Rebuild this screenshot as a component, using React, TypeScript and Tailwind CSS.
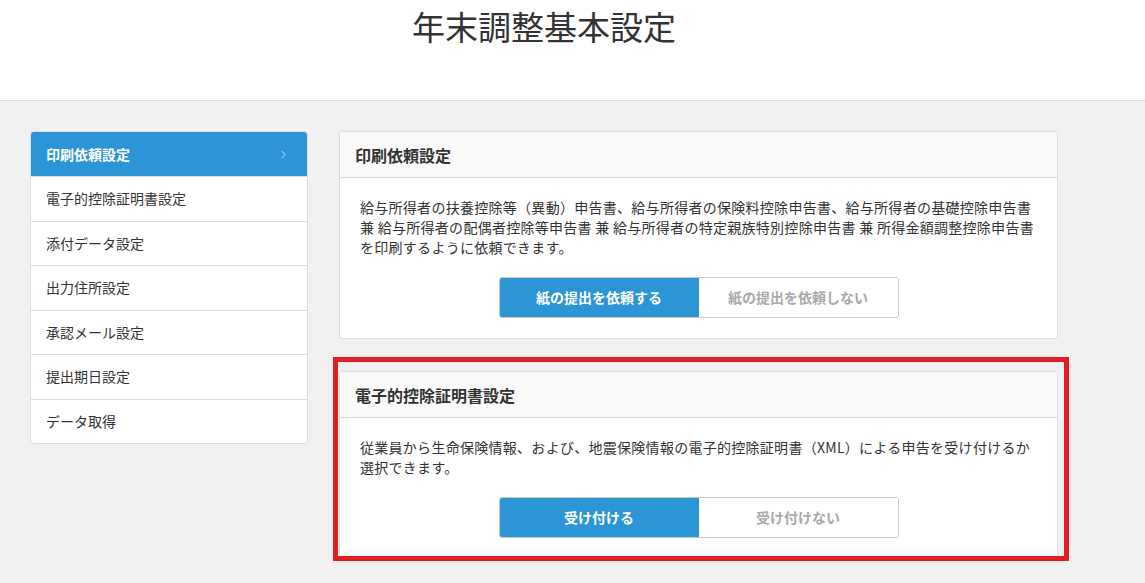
import { ChevronRight } from "lucide-react"

const menu = [
  "印刷依頼設定",
  "電子的控除証明書設定",
  "添付データ設定",
  "出力住所設定",
  "承認メール設定",
  "提出期日設定",
  "データ取得",
]

function Toggle({ on, off }: { on: string; off: string }) {
  return (
    <div className="mx-auto mt-[20px] flex h-[41px] w-[400px] overflow-hidden rounded-[3px] border border-[#c8c8c8] text-[14px] font-bold">
      <div className="flex w-1/2 items-center justify-center bg-[#2b95d6] text-white">{on}</div>
      <div className="flex w-1/2 items-center justify-center bg-white text-[#a9a9a9]">{off}</div>
    </div>
  )
}

function Card({ title, children }: { title: string; children: React.ReactNode }) {
  return (
    <div className="overflow-hidden rounded-[3px] border border-[#dddddd] bg-white">
      <div className="flex h-[46px] items-center border-b border-[#dddddd] bg-[#fafafa] px-[15px] text-[16px] font-bold text-[#333]">
        {title}
      </div>
      <div className="px-[20px] pb-[20px] pt-[19px]">{children}</div>
    </div>
  )
}

export default function App() {
  return (
    <div className="min-h-screen bg-[#f1f1f1] font-['Noto_Sans_CJK_JP',sans-serif] text-[#333]">
      {/* ヘッダー */}
      <header className="h-[101px] border-b border-[#dcdcdc] bg-white">
        <h1 className="ml-[30px] w-[1028px] pt-[10px] text-center text-[33px] font-normal leading-[32px] text-[#333]">
          年末調整基本設定
        </h1>
      </header>

      <div className="ml-[30px] flex w-[1028px] items-start gap-[31px] pt-[30px]">
        {/* サイドメニュー */}
        <nav className="w-[278px] shrink-0 overflow-hidden rounded-[4px] border border-[#dddddd] bg-white">
          {menu.map((label, i) => (
            <div
              key={label}
              className={
                i === 0
                  ? "flex h-[44px] items-center justify-between bg-[#2b95d6] pl-[15px] pr-[17px] text-[14px] font-bold text-white"
                  : "flex h-[44.5px] items-center border-t border-[#dddddd] pl-[15px] text-[14px] text-[#333]"
              }
            >
              <span>{label}</span>
              {i === 0 && <ChevronRight className="h-[13px] w-[13px] text-white/80" strokeWidth={1.75} />}
            </div>
          ))}
        </nav>

        {/* 設定カード */}
        <main className="flex w-[719px] flex-col gap-[32px]">
          <Card title="印刷依頼設定">
            <p className="text-[14px] leading-[20px] tracking-[0.02em]">
              給与所得者の扶養控除等（異動）申告書、給与所得者の保険料控除申告書、給与所得者の基礎控除申告書 兼 給与所得者の配偶者控除等申告書 兼 給与所得者の特定親族特別控除申告書 兼 所得金額調整控除申告書を印刷するように依頼できます。
            </p>
            <Toggle on="紙の提出を依頼する" off="紙の提出を依頼しない" />
          </Card>

          <div className="relative">
            <Card title="電子的控除証明書設定">
              <p className="text-[14px] leading-[20px] tracking-[0.02em]">
                従業員から生命保険情報、および、地震保険情報の電子的控除証明書（XML）による申告を受け付けるか選択できます。
              </p>
              <Toggle on="受け付ける" off="受け付けない" />
            </Card>
            {/* 強調枠 */}
            <div className="pointer-events-none absolute -bottom-[2px] -left-[6px] -right-[11px] -top-[14px] border-[5px] border-[#e21d24]" />
          </div>
        </main>
      </div>
    </div>
  )
}
